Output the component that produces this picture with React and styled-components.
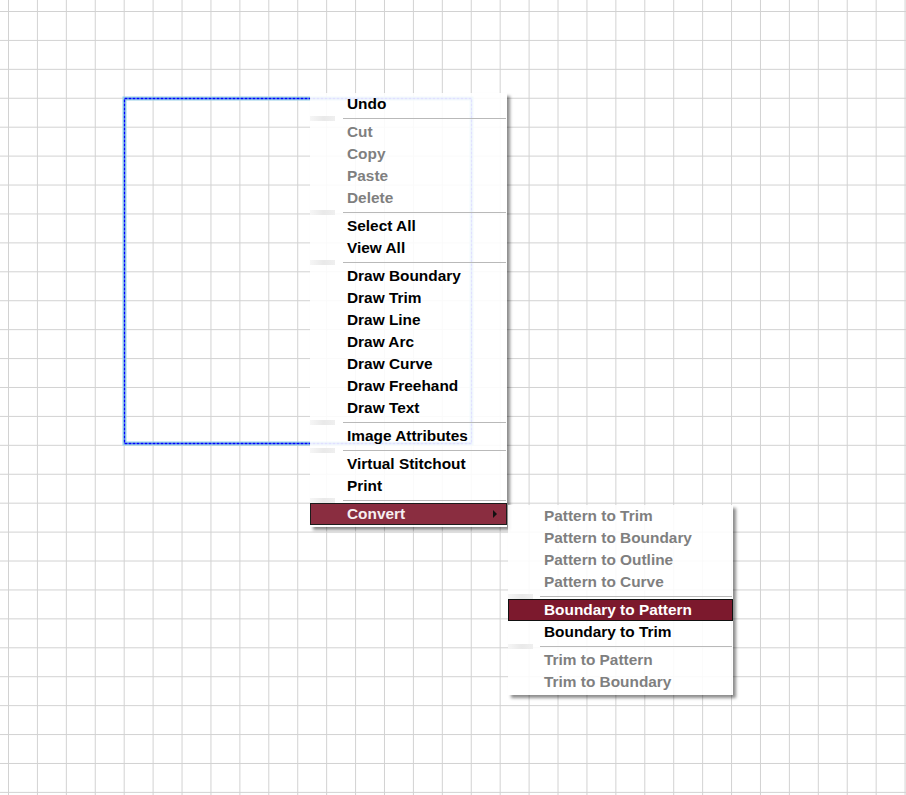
import React from "react";
import styled, { createGlobalStyle } from "styled-components";

const GlobalStyle = createGlobalStyle`
  html, body {
    margin: 0;
    padding: 0;
  }
  body {
    width: 906px;
    height: 795px;
    overflow: hidden;
    background-color: #fff;
    background-image:
      linear-gradient(to right, #d2d2d2 1px, transparent 1px),
      linear-gradient(to bottom, #d2d2d2 1px, transparent 1px);
    background-size: 28.93px 28.93px;
    background-position: 8px 11px;
    font-family: "Liberation Sans", Arial, sans-serif;
  }
`;

const mainItems = [
  { label: "Undo" },
  { sep: true },
  { label: "Cut", disabled: true },
  { label: "Copy", disabled: true },
  { label: "Paste", disabled: true },
  { label: "Delete", disabled: true },
  { sep: true },
  { label: "Select All" },
  { label: "View All" },
  { sep: true },
  { label: "Draw Boundary" },
  { label: "Draw Trim" },
  { label: "Draw Line" },
  { label: "Draw Arc" },
  { label: "Draw Curve" },
  { label: "Draw Freehand" },
  { label: "Draw Text" },
  { sep: true },
  { label: "Image Attributes" },
  { sep: true },
  { label: "Virtual Stitchout" },
  { label: "Print" },
  { sep: true },
  { label: "Convert", open: true, sub: true },
];

const convertItems = [
  { label: "Pattern to Trim", disabled: true },
  { label: "Pattern to Boundary", disabled: true },
  { label: "Pattern to Outline", disabled: true },
  { label: "Pattern to Curve", disabled: true },
  { sep: true },
  { label: "Boundary to Pattern", hover: true },
  { label: "Boundary to Trim" },
  { sep: true },
  { label: "Trim to Pattern", disabled: true },
  { label: "Trim to Boundary", disabled: true },
];

const Canvas = styled.div`
  position: relative;
  width: 906px;
  height: 795px;
`;

// selected shape on the drawing canvas
const Selection = styled.svg`
  position: absolute;
  left: 120px;
  top: 94px;
  overflow: visible;
`;

const Menu = styled.div`
  position: absolute;
  left: ${(p) => p.$x}px;
  top: ${(p) => p.$y}px;
  width: ${(p) => p.$w}px;
  padding-bottom: 2px;
  background: rgba(255, 255, 255, 0.88);
  box-shadow: 3px 3px 3px rgba(0, 0, 0, 0.45);
  display: flex;
  flex-direction: column;
`;

const Row = styled.div`
  position: relative;
  height: 22px;
  box-sizing: border-box;
  padding-left: ${(p) => p.$indent}px;
  display: flex;
  align-items: center;
  font-size: 15.4px;
  font-weight: bold;
  white-space: nowrap;
  color: ${(p) => (p.$disabled ? "#7f7f7f" : "#000")};

  ${(p) =>
    p.$open &&
    `
    background: #8a2d40;
    border: 1px solid #1c1c1c;
    color: #f6eef0;
    padding-left: ${p.$indent - 1}px;
  `}

  ${(p) =>
    p.$hover &&
    `
    background: #7c192d;
    border: 1px solid #111;
    color: #fff;
    padding-left: ${p.$indent - 1}px;
  `}
`;

const Arrow = styled.span`
  position: absolute;
  right: 9px;
  top: 6px;
  width: 0;
  height: 0;
  border-top: 4px solid transparent;
  border-bottom: 4px solid transparent;
  border-left: 4px solid #111;
`;

const Separator = styled.div`
  height: 6px;
  display: flex;
  align-items: center;
`;

const Gutter = styled.div`
  width: 25px;
  height: 5px;
  background: linear-gradient(to right, #f6f6f6, #e9e9e9 55%, #efefef);
`;

const Rule = styled.div`
  flex: 1;
  height: 1px;
  margin-left: ${(p) => p.$gap}px;
  margin-right: 1px;
  background: #b9b9b9;
`;

function MenuList({ items, x, y, w, indent, gap }) {
  return (
    <Menu $x={x} $y={y} $w={w}>
      {items.map((it, i) =>
        it.sep ? (
          <Separator key={i}>
            <Gutter />
            <Rule $gap={gap} />
          </Separator>
        ) : (
          <Row
            key={i}
            $indent={indent}
            $disabled={it.disabled}
            $open={it.open}
            $hover={it.hover}
          >
            {it.label}
            {it.sub && <Arrow />}
          </Row>
        )
      )}
    </Menu>
  );
}

export default function App() {
  return (
    <>
      <GlobalStyle />
      <Canvas>
        <Selection width="356" height="354">
          <rect
            x="4.5"
            y="4.5"
            width="347"
            height="345"
            fill="none"
            stroke="#98d0e6"
            strokeWidth="4"
          />
          <rect
            x="4.5"
            y="4.5"
            width="347"
            height="345"
            fill="none"
            stroke="#0000ff"
            strokeWidth="1.3"
            strokeDasharray="3 1"
          />
        </Selection>
        <MenuList items={mainItems} x={310} y={93} w={197} indent={37} gap={8} />
        <MenuList items={convertItems} x={508} y={505} w={225} indent={36} gap={7} />
      </Canvas>
    </>
  );
}
